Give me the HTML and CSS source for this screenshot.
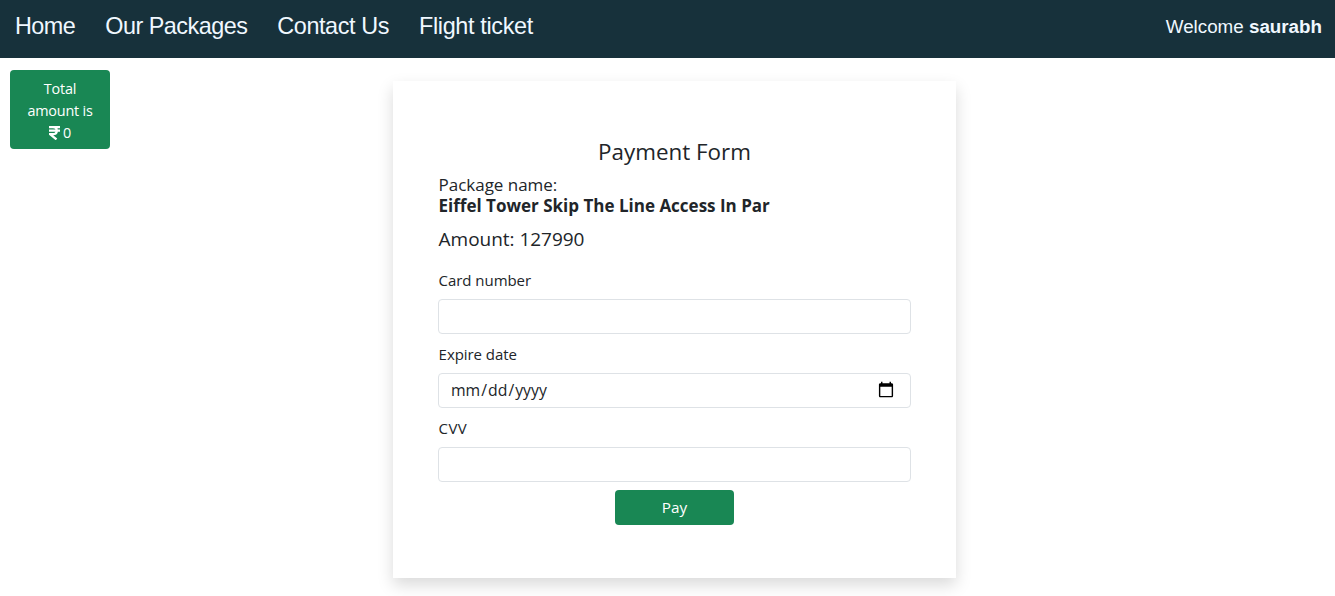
FILE: index.html
```
<!DOCTYPE html>
<html lang="en">
<head>
<meta charset="utf-8">
<title>Payment</title>
<link rel="stylesheet" href="styles.css">
</head>
<body>
<header class="navbar">
  <nav class="links">
    <a class="link" href="#">Home</a>
    <a class="link" href="#">Our Packages</a>
    <a class="link contact" href="#">Contact Us</a>
    <a class="link flight" href="#">Flight ticket</a>
  </nav>
  <div class="welcome">Welcome <b>saurabh</b></div>
</header>
<main class="page">
  <button class="total" type="button">
    <span>Total</span>
    <span>amount is</span>
    <span class="sum"><svg class="rupee" viewBox="0 0 11 14"><path d="M0 1.2H11M0 4.7H11M1 1.2H4C9 1.2 9 8.2 4 8.2H1L7.5 13.4" fill="none" stroke="#fff" stroke-width="2.3"/></svg>0</span>
  </button>
  <form class="card">
    <h1 class="title">Payment Form</h1>
    <div class="pkg-label">Package name:</div>
    <div class="pkg-name">Eiffel Tower Skip The Line Access In Par</div>
    <div class="amount">Amount: 127990</div>
    <label class="label" for="card">Card number</label>
    <input class="input" id="card" type="text">
    <label class="label" for="date">Expire date</label>
    <input class="input date" id="date" type="date">
    <label class="label cvv" for="cvv">CVV</label>
    <input class="input" id="cvv" type="text">
    <button class="pay" type="button">Pay</button>
  </form>
</main>
</body>
</html>
```
FILE: styles.css
```
* { box-sizing: border-box; }
body {
  margin: 0;
  height: 596px;
  overflow: hidden;
  background: #fff;
  color: #212529;
  font-family: "Open Sans", "Noto Sans", sans-serif;
}
.navbar {
  height: 58px;
  padding: 0 13px 0 15px;
  display: flex;
  justify-content: space-between;
  background: #17313b;
  color: #f0f8ff;
  font-family: "Liberation Sans", Arial, sans-serif;
}
.links { display: flex; gap: 30px; }
.link {
  color: inherit;
  text-decoration: none;
  font-size: 23.4px;
  letter-spacing: -.52px;
  line-height: 52px;
  white-space: nowrap;
}
.contact { letter-spacing: -.4px; }
.flight { letter-spacing: -.34px; }
.welcome { font-size: 18.8px; line-height: 53px; }
.page {
  display: grid;
  grid-template-columns: 100px 563px;
  column-gap: 283px;
  padding: 12px 0 0 10px;
  align-items: start;
}
.total {
  width: 100px;
  height: 79px;
  padding: 8px 0 5px;
  display: flex;
  flex-direction: column;
  align-items: center;
  border: 0;
  border-radius: 4px;
  background: #198754;
  color: #fff;
  font: 14.4px/22px "Open Sans", "Noto Sans", sans-serif;
  letter-spacing: -.2px;
}
.sum { display: flex; align-items: center; gap: 3px; }
.rupee { width: 11px; height: 14px; }
.card {
  height: 497px;
  margin-top: 11px;
  padding: 57px 45px 0;
  display: flex;
  flex-direction: column;
  background: #fff;
  box-shadow: 0 7px 15px rgba(0, 0, 0, .15);
}
.title {
  margin: 0;
  height: 36px;
  text-align: center;
  font-size: 22.4px;
  font-weight: 400;
  line-height: 28px;
}
.pkg-label, .pkg-name, .amount, .label { padding-left: .6px; white-space: nowrap; }
.pkg-label { height: 21px; font-size: 17px; line-height: 21px; letter-spacing: -.03px; }
.pkg-name { height: 29px; font-size: 17px; line-height: 21px; font-weight: 700; }
.amount { height: 45px; font-size: 19px; line-height: 31px; letter-spacing: -.03px; }
.label { height: 30px; font-size: 15px; line-height: 23px; letter-spacing: -.05px; }
.cvv { letter-spacing: .4px; }
.input {
  width: 473px;
  height: 35px;
  margin: 0 0 9px;
  padding: 0 12px;
  border: 1px solid #dee2e6;
  border-radius: 4px;
  background: #fff;
  color: #212529;
  font: 15.8px/23px "Open Sans", "Noto Sans", sans-serif;
  outline: 0;
}
.date { padding: 0 13px 0 11px; }
.date::-webkit-calendar-picker-indicator { width: 18px; height: 18px; padding: 1px 2px 2px; background-size: contain; }
.pay {
  width: 119px;
  height: 35px;
  margin-top: -1px;
  padding: 0;
  align-self: center;
  border: 0;
  border-radius: 4px;
  background: #198754;
  color: #fff;
  font: 15.3px/35px "Open Sans", "Noto Sans", sans-serif;
}
```
